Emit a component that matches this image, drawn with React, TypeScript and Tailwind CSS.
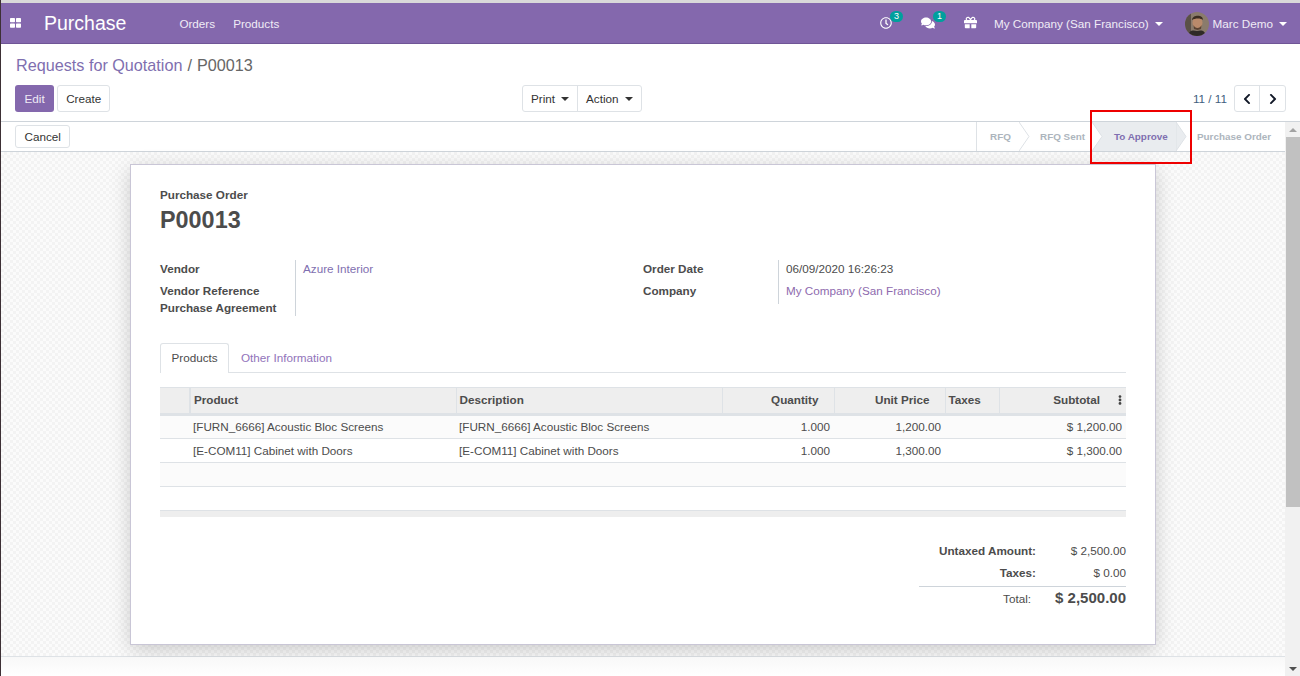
import { FaChevronLeft, FaChevronRight, FaComments, FaEllipsisV, FaGift, FaRegClock } from "react-icons/fa";

const rows = [
  { name: "[FURN_6666] Acoustic Bloc Screens", price: "1,200.00", subtotal: "$ 1,200.00" },
  { name: "[E-COM11] Cabinet with Doors", price: "1,300.00", subtotal: "$ 1,300.00" },
];

const Caret = () => (
  <span className="ml-[6px] inline-block border-x-[4px] border-t-[4px] border-x-transparent border-t-current align-[2px]" />
);

const Chevron = () => (
  <svg className="absolute top-0 left-full z-10" width="11" height="29" viewBox="0 0 11 29">
    <path d="M0 0L10 14.5L0 29" fill="#fff" stroke="#dee2e6" />
  </svg>
);

const Avatar = () => (
  <svg width="24" height="24" viewBox="0 0 24 24">
    <defs>
      <clipPath id="av"><circle cx="12" cy="12" r="12" /></clipPath>
    </defs>
    <g clipPath="url(#av)">
      <rect width="24" height="24" fill="#8a7b6c" />
      <rect x="0" y="0" width="6" height="24" fill="#5a5047" />
      <ellipse cx="12.5" cy="10.5" rx="5" ry="6.500" fill="#b98a6b" />
      <path d="M7 8C7 3 18 2 18 8C16 6 10 6 7 8Z" fill="#3b2d22" />
      <path d="M8.500 13C10 17 15 17 16.500 13L16 17L12.500 18L9 17Z" fill="#5b4332" />
      <path d="M3 24C4 18 8 18 12 19C16 18 20 18 21 24Z" fill="#2f2a27" />
    </g>
  </svg>
);

const App = () => {
  return (
    <div className="relative flex h-[676px] w-[1300px] flex-col overflow-hidden border-l border-[#3d3035] bg-white font-['Liberation_Sans',Arial,sans-serif] text-[11.700px] text-[#4c4c4c]">
      <div className="h-[3px] shrink-0 bg-[#d9d9d9]" />
      {/* navbar */}
      <div className="flex h-[41px] shrink-0 items-center border-b border-[#6f5596] bg-[#8468ad] text-white">
        <svg className="ml-[9px]" width="11" height="10" viewBox="0 0 11 10" fill="#fff">
          <rect x="0" y="0" width="5" height="4.300" rx="0.700" />
          <rect x="6" y="0" width="5" height="4.300" rx="0.700" />
          <rect x="0" y="5.500" width="5" height="4.300" rx="0.700" />
          <rect x="6" y="5.500" width="5" height="4.300" rx="0.700" />
        </svg>
        <span className="ml-[23px] pt-[2px] text-[19.500px] leading-none">Purchase</span>
        <span className="ml-[53px] pt-[2px] text-[#f0ecf6]">Orders</span>
        <span className="ml-[18px] pt-[2px] text-[#f0ecf6]">Products</span>
        <div className="ml-auto flex items-center pt-[1px]">
          <span className="relative mb-[2px]">
            <FaRegClock className="h-[12px] w-[12px]" />
            <span className="absolute top-[-6px] left-[10px] flex h-[11px] min-w-[13px] items-center justify-center rounded-full bg-[#00a09d] text-[9px] leading-none">3</span>
          </span>
          <span className="relative mb-[2px] ml-[29px]">
            <FaComments className="h-[14px] w-[14px]" />
            <span className="absolute top-[-5px] left-[12px] flex h-[11px] min-w-[13px] items-center justify-center rounded-full bg-[#00a09d] text-[9px] leading-none">1</span>
          </span>
          <FaGift className="mb-[2px] ml-[29px] h-[13px] w-[13px]" />
          <span className="ml-[17px] text-[#f0ecf6]">My Company (San Francisco)</span>
          <Caret />
          <span className="ml-[22px] flex"><Avatar /></span>
          <span className="ml-[4px] text-[#f0ecf6]">Marc Demo</span>
          <span className="mr-[13px]"><Caret /></span>
        </div>
      </div>
      {/* control panel */}
      <div className="shrink-0 border-b border-[#ced4da] pr-[14px] pl-[14px]">
        <div className="mt-[11px] h-[20px] pl-[1px] text-[16.200px] leading-[20px]">
          <span className="text-[#7f6fb0]">Requests for Quotation</span>
          <span className="ml-[5px] text-[#666]">/</span>
          <span className="ml-[5px] text-[#666]">P00013</span>
        </div>
        <div className="mt-[10px] flex h-[36px] items-start">
          <div className="flex w-[507px] gap-[3px]">
            <button className="h-[27px] rounded-[3px] bg-[#8468ad] px-[9.500px] text-[#efeaf5]">Edit</button>
            <button className="h-[27px] rounded-[3px] border border-[#dee2e6] px-[8px] text-[#333]">Create</button>
          </div>
          <div className="flex h-[27px] rounded-[3px] border border-[#dee2e6] text-[#333]">
            <button className="flex items-center border-r border-[#dee2e6] pr-[8px] pl-[8px]">Print<Caret /></button>
            <button className="flex items-center pr-[8px] pl-[8px]">Action<Caret /></button>
          </div>
          <div className="ml-auto flex items-center">
            <span className="mr-[7px] text-[#3f5f80]">11 / 11</span>
            <div className="flex h-[27px] rounded-[3px] border border-[#dee2e6] text-[#111827]">
              <span className="flex w-[25px] items-center justify-center border-r border-[#dee2e6]"><FaChevronLeft className="h-[12px] w-[12px]" /></span>
              <span className="flex w-[25px] items-center justify-center"><FaChevronRight className="h-[12px] w-[12px]" /></span>
            </div>
          </div>
        </div>
      </div>
      <div className="flex min-h-0 flex-1">
        <div className="flex min-w-0 flex-1 flex-col">
          {/* statusbar */}
          <div className="flex h-[30px] shrink-0 items-center justify-between border-b border-[#ced4da] pl-[14px]">
            <button className="h-[23px] rounded-[3px] border border-[#dee2e6] px-[8.500px] text-[#333]">Cancel</button>
            <div className="flex h-[29px] self-start border-l border-[#dee2e6] text-[9.900px] font-bold text-[#adb5bd]">
              <div className="relative flex w-[42px] items-center pt-[1px] pl-[13px]">RFQ<Chevron /></div>
              <div className="relative flex w-[73px] items-center pt-[1px] pl-[21px]">RFQ Sent<Chevron /></div>
              <div className="relative flex w-[84px] items-center bg-[#e9ecef] pt-[1px] pl-[22px] text-[#7f6fb0]">
                To Approve
                <svg className="absolute top-0 left-full z-10" width="11" height="29" viewBox="0 0 11 29">
                  <path d="M0 0L10 14.500L0 29Z" fill="#e9ecef" stroke="#dee2e6" />
                </svg>
                <svg className="absolute top-0 left-0" width="10" height="29" viewBox="0 0 10 29">
                  <path d="M0 0L9 14.500L0 29Z" fill="#fff" stroke="#dee2e6" />
                </svg>
              </div>
              <div className="flex w-[109px] items-center pt-[1px] pl-[21px]">Purchase Order</div>
            </div>
          </div>
          {/* sheet area */}
          <div className="h-[505px] shrink-0 border-b border-[#dee2e6] bg-[repeating-conic-gradient(#f3f3f3_0_25%,#fbfbfb_0_50%)] bg-[length:6px_6px] pt-[12px]">
            <div className="mx-auto h-[481px] w-[1026px] border border-[#c9c6d6] bg-white px-[29px] shadow-[0_5px_20px_-1px_rgba(0,0,0,0.2)]">
              <div className="mt-[22px] leading-[15px] font-bold">Purchase Order</div>
              <div className="mt-[3px] text-[23.400px] leading-[30px] font-bold">P00013</div>
              <div className="mt-[25px] flex h-[56px]">
                <div className="flex h-[56px] w-[483px]">
                  <div className="w-[136px] border-r border-[#ced4da] leading-[17px] font-bold">
                    <div className="h-[22px]">Vendor</div>
                    <div className="h-[17px]">Vendor Reference</div>
                    <div className="h-[17px]">Purchase Agreement</div>
                  </div>
                  <div className="pl-[7px] leading-[17px] text-[#7f6fb0]">Azure Interior</div>
                </div>
                <div className="flex h-[44px]">
                  <div className="w-[136px] border-r border-[#ced4da] leading-[17px] font-bold">
                    <div className="h-[22px]">Order Date</div>
                    <div className="h-[17px]">Company</div>
                  </div>
                  <div className="pl-[7px] leading-[17px]">
                    <div className="h-[22px]">06/09/2020 16:26:23</div>
                    <div className="h-[17px] text-[#8e6aae]">My Company (San Francisco)</div>
                  </div>
                </div>
              </div>
              {/* tabs */}
              <div className="mt-[27px] flex h-[30px] border-b border-[#dee2e6]">
                <div className="flex h-[30px] w-[69px] items-center justify-center rounded-t-[3px] border border-b-0 border-[#dee2e6] bg-white pb-[1px]">Products</div>
                <div className="flex h-[29px] items-center pl-[12px] text-[#9173ba]">Other Information</div>
              </div>
              {/* lines */}
              <table className="mt-[14px] w-[966px] table-fixed border-collapse">
                <thead>
                  <tr className="h-[27px] border-t border-b-[3px] border-[#dee2e6] bg-[#eeeeee] font-bold">
                    <th className="w-[30px] border-r-2 border-[#dee2e6]" />
                    <th className="w-[266px] border-r border-[#dee2e6] pb-[1px] pl-[3px] text-left">Product</th>
                    <th className="w-[266px] border-r border-[#dee2e6] pb-[1px] pl-[3px] text-left">Description</th>
                    <th className="w-[112px] border-r border-[#dee2e6] pr-[15px] pb-[1px] text-right">Quantity</th>
                    <th className="w-[111px] border-r border-[#dee2e6] pr-[15px] pb-[1px] text-right">Unit Price</th>
                    <th className="w-[54px] border-r border-[#dee2e6] pb-[1px] pl-[3px] text-left">Taxes</th>
                    <th className="relative w-[127px] pr-[26px] pb-[1px] text-right">
                      Subtotal
                      <FaEllipsisV className="absolute top-[7px] right-[1px] h-[10px] w-[10px] text-[#444]" />
                    </th>
                  </tr>
                </thead>
                <tbody>
                  {rows.map((row, i) => (
                    <tr key={row.name} className={`h-[24px] border-b border-[#dee2e6] ${i === 0 ? "bg-[#fbfbfb]" : ""}`}>
                      <td />
                      <td className="pl-[3px]">{row.name}</td>
                      <td className="pl-[3px]">{row.name}</td>
                      <td className="pr-[4px] text-right">1.000</td>
                      <td className="pr-[4px] text-right">{row.price}</td>
                      <td />
                      <td className="pr-[4px] text-right">{row.subtotal}</td>
                    </tr>
                  ))}
                  <tr className="h-[24px] border-b border-[#dee2e6] bg-[#fbfbfb]"><td colSpan={7} /></tr>
                  <tr className="h-[24px] border-b border-[#dee2e6]"><td colSpan={7} /></tr>
                </tbody>
              </table>
              <div className="h-[6px] w-[966px] bg-[#eeeeee]" />
              {/* totals */}
              <div className="mt-[25px] ml-auto w-[207px]">
                <div className="flex h-[18px] items-center justify-between">
                  <span className="w-[117px] text-right font-bold">Untaxed Amount:</span>
                  <span>$ 2,500.00</span>
                </div>
                <div className="mt-[4px] flex h-[18px] items-center justify-between">
                  <span className="w-[117px] text-right font-bold">Taxes:</span>
                  <span>$ 0.00</span>
                </div>
                <div className="mt-[4px] flex h-[24px] items-center justify-between border-t border-[#ced4da]">
                  <span className="w-[112px] text-right">Total:</span>
                  <span className="text-[15px] font-bold">$ 2,500.00</span>
                </div>
              </div>
            </div>
          </div>
          <div className="flex-1 bg-[linear-gradient(#f8f8f8,#fff)]" />
        </div>
        {/* scrollbar */}
        <div className="flex w-[15px] shrink-0 flex-col bg-[#f1f1f1]">
          <div className="flex h-[15px] items-center justify-center">
            <span className="border-x-[4px] border-b-[4px] border-x-transparent border-b-[#a3a3a3]" />
          </div>
          <div className="ml-[1px] h-[370px] bg-[#c1c1c1]" />
          <div className="mt-auto flex h-[15px] items-center justify-center">
            <span className="border-x-[4px] border-t-[4px] border-x-transparent border-t-[#505050]" />
          </div>
        </div>
      </div>
      {/* highlight around the active step */}
      <div className="absolute top-[110px] left-[1089px] h-[54px] w-[102px] border-2 border-[#ee0000]" />
    </div>
  );
};

export default App;
